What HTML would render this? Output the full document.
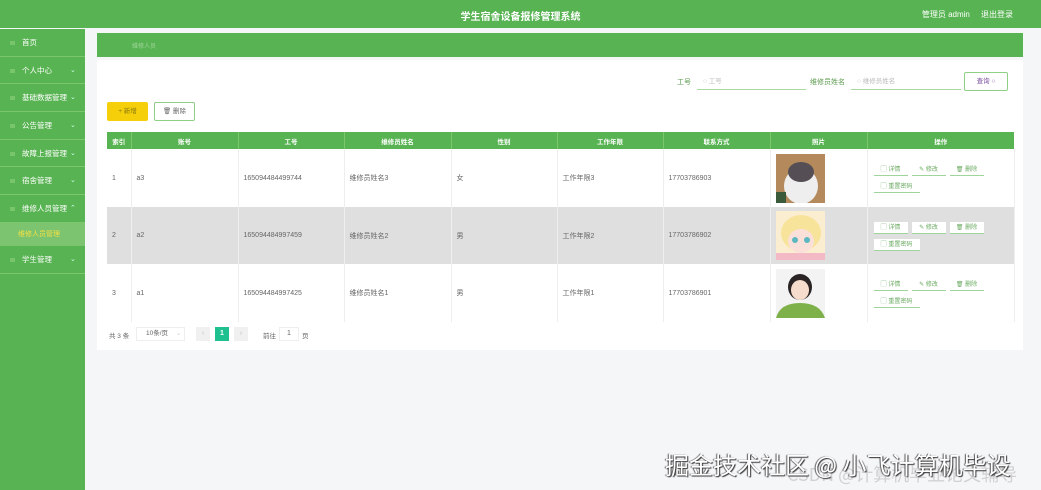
<!DOCTYPE html>
<html><head><meta charset="utf-8"><style>
*{margin:0;padding:0;box-sizing:border-box}
body{width:1041px;height:490px;overflow:hidden;background:#f4f6f8;font-family:"Liberation Sans","Noto Sans CJK SC",sans-serif;position:relative;font-size:7px;color:#666}
.top{position:absolute;left:0;top:0;width:1041px;height:28px;background:#58b352}
.top .t{position:absolute;left:0;width:1041px;top:8px;text-align:center;color:#fff;font-size:10px;font-weight:bold}
.top .r{position:absolute;right:28px;top:9px;color:#fff;font-size:8px}
.side{position:absolute;left:0;top:29px;width:85px;height:461px;background:#58b352}
.it{height:27.7px;border-bottom:1px solid #7cc66c;color:#fff;font-size:7.5px;line-height:27px;padding-left:22px;position:relative}
.it:before{content:"";position:absolute;left:10px;top:12px;width:5px;height:4px;background:#8fd07f;opacity:.6}
.it .a{position:absolute;left:70px;top:0;font-size:7px;color:#cfe}
.sub{height:23px;background:#7cc470;color:#f5e042;font-size:7px;line-height:23px;padding-left:18px}
.bc{position:absolute;left:97px;top:33px;width:926px;height:24px;background:#58b352}
.bc span{position:absolute;left:35px;top:8px;color:#9fd79a;font-size:6px}
.card{position:absolute;left:97px;top:60px;width:926px;height:290px;background:#fff}
.lab{position:absolute;font-size:7px;color:#5a9a4c}
.inp{position:absolute;height:16px;border-bottom:1px solid #a9d8a0;color:#bbb;font-size:6.5px;line-height:16px;padding-left:6px}
.btn{position:absolute;border:1px solid #8fcf86;border-radius:2px;font-size:6.5px;text-align:center}
table{position:absolute;left:107px;top:132px;border-collapse:collapse;font-size:7px;color:#666}
th{background:#58b352;color:#fff;height:17px;font-weight:bold;font-size:6.5px;border-right:1px solid #7cc66c}
td{border-right:1px solid #eee;padding-left:5px;text-align:left}
tr.g td{background:#e0dfdf}
.ops{padding-left:6px}
.op{display:inline-block;width:34px;height:12px;border-bottom:1px solid #9fd59a;margin:3px 4px 2px 0;font-size:6px;text-align:center;line-height:12px;color:#6aaa60;background:#fff}
tr:not(.g) .op{background:none}
.op.w{width:46px}
.pic{width:49px;height:49px;display:block}
.wm{position:absolute;left:665px;top:446px;font-size:24px;color:#fff;text-shadow:1px 1px 1px #333,-1px 0 1px #555;font-family:"Noto Sans CJK SC",sans-serif;white-space:nowrap}
.wm2{position:absolute;left:787px;top:461px;font-size:18px;color:rgba(200,200,200,.8);font-family:"Noto Sans CJK SC",sans-serif;white-space:nowrap}
</style></head><body>
<div class="top"><div class="t">学生宿舍设备报修管理系统</div><div class="r">管理员 admin &nbsp;&nbsp;&nbsp; 退出登录</div></div>
<div class="side">
<div class="it">首页</div>
<div class="it">个人中心<span class="a">⌄</span></div>
<div class="it">基础数据管理<span class="a">⌄</span></div>
<div class="it">公告管理<span class="a">⌄</span></div>
<div class="it">故障上报管理<span class="a">⌄</span></div>
<div class="it">宿舍管理<span class="a">⌄</span></div>
<div class="it">维修人员管理<span class="a">⌃</span></div>
<div class="sub">维修人员管理</div>
<div class="it">学生管理<span class="a">⌄</span></div>
</div>
<div class="bc"><span>维修人员</span></div>
<div class="card"></div>
<div class="lab" style="left:677px;top:77px">工号</div>
<div class="inp" style="left:697px;top:74px;width:109px">○ 工号</div>
<div class="lab" style="left:810px;top:77px">维修员姓名</div>
<div class="inp" style="left:851px;top:74px;width:110px">○ 维修员姓名</div>
<div class="btn" style="left:964px;top:72px;width:44px;height:19px;line-height:17px;color:#7a4fa0">查询 ○</div>
<div class="btn" style="left:107px;top:102px;width:41px;height:19px;line-height:17px;background:#f5cf0a;border-color:#f5cf0a;color:#8a7a10">+ 新增</div>
<div class="btn" style="left:154px;top:102px;width:41px;height:19px;line-height:17px;color:#666">🗑 删除</div>
<table>
<tr><th style="width:24px">索引</th><th style="width:107px">账号</th><th style="width:106px">工号</th><th style="width:107px">维修员姓名</th><th style="width:106px">性别</th><th style="width:106px">工作年限</th><th style="width:107px">联系方式</th><th style="width:97px">照片</th><th style="width:147px;border:0">操作</th></tr>
<tr style="height:58px;background:#fff"><td>1</td><td>a3</td><td>165094484499744</td><td>维修员姓名3</td><td>女</td><td>工作年限3</td><td>17703786903</td><td><svg class="pic" viewBox="0 0 49 49"><rect width="49" height="49" fill="#b48a5c"/><ellipse cx="25" cy="32" rx="17" ry="18" fill="#eee"/><ellipse cx="25" cy="18" rx="13" ry="10" fill="#554f55"/><rect x="0" y="38" width="10" height="11" fill="#3a5a3a"/></svg></td><td class="ops"><span class="op">▢ 详情</span><span class="op">✎ 修改</span><span class="op">🗑 删除</span><br><span class="op w">▢ 重置密码</span></td></tr>
<tr class="g" style="height:57px"><td>2</td><td>a2</td><td>165094484997459</td><td>维修员姓名2</td><td>男</td><td>工作年限2</td><td>17703786902</td><td><svg class="pic" viewBox="0 0 49 49"><rect width="49" height="49" fill="#fbeed0"/><ellipse cx="25" cy="22" rx="20" ry="18" fill="#f8e39a"/><ellipse cx="25" cy="30" rx="13" ry="12" fill="#fbe0da"/><circle cx="19" cy="29" r="3" fill="#5cb8c0"/><circle cx="31" cy="29" r="3" fill="#5cb8c0"/><rect y="42" width="49" height="7" fill="#f3b9c5"/></svg></td><td class="ops"><span class="op">▢ 详情</span><span class="op">✎ 修改</span><span class="op">🗑 删除</span><br><span class="op w">▢ 重置密码</span></td></tr>
<tr style="height:58px;background:#fff"><td>3</td><td>a1</td><td>165094484997425</td><td>维修员姓名1</td><td>男</td><td>工作年限1</td><td>17703786901</td><td><svg class="pic" viewBox="0 0 49 49"><rect width="49" height="49" fill="#f3f3f3"/><ellipse cx="24" cy="18" rx="12" ry="13" fill="#2b2424"/><ellipse cx="24" cy="21" rx="9" ry="10" fill="#f6dccc"/><path d="M0 49 Q4 34 24 34 Q44 34 49 49Z" fill="#7fb14a"/></svg></td><td class="ops"><span class="op">▢ 详情</span><span class="op">✎ 修改</span><span class="op">🗑 删除</span><br><span class="op w">▢ 重置密码</span></td></tr>
</table>
<div style="position:absolute;left:109px;top:330px;font-size:6.5px">共 3 条</div>
<div style="position:absolute;left:136px;top:327px;width:49px;height:14px;border:1px solid #eee;font-size:6.5px;line-height:12px;padding-left:9px">10条/页 <span style="color:#ccc;margin-left:6px">⌄</span></div>
<div style="position:absolute;left:196px;top:327px;width:14px;height:14px;background:#f0f0f0;color:#bbb;text-align:center;line-height:14px">‹</div>
<div style="position:absolute;left:215px;top:327px;width:14px;height:14px;background:#1ec08f;color:#fff;text-align:center;line-height:14px;font-weight:bold">1</div>
<div style="position:absolute;left:234px;top:327px;width:14px;height:14px;background:#f0f0f0;color:#bbb;text-align:center;line-height:14px">›</div>
<div style="position:absolute;left:263px;top:330px;font-size:6.5px">前往</div>
<div style="position:absolute;left:279px;top:327px;width:20px;height:14px;border:1px solid #eee;text-align:center;line-height:12px">1</div>
<div style="position:absolute;left:302px;top:330px;font-size:6.5px">页</div>
<div class="wm2">CSDN @计算机毕业论文辅导</div>
<div class="wm">掘金技术社区 @ 小飞计算机毕设</div>
</body></html>
